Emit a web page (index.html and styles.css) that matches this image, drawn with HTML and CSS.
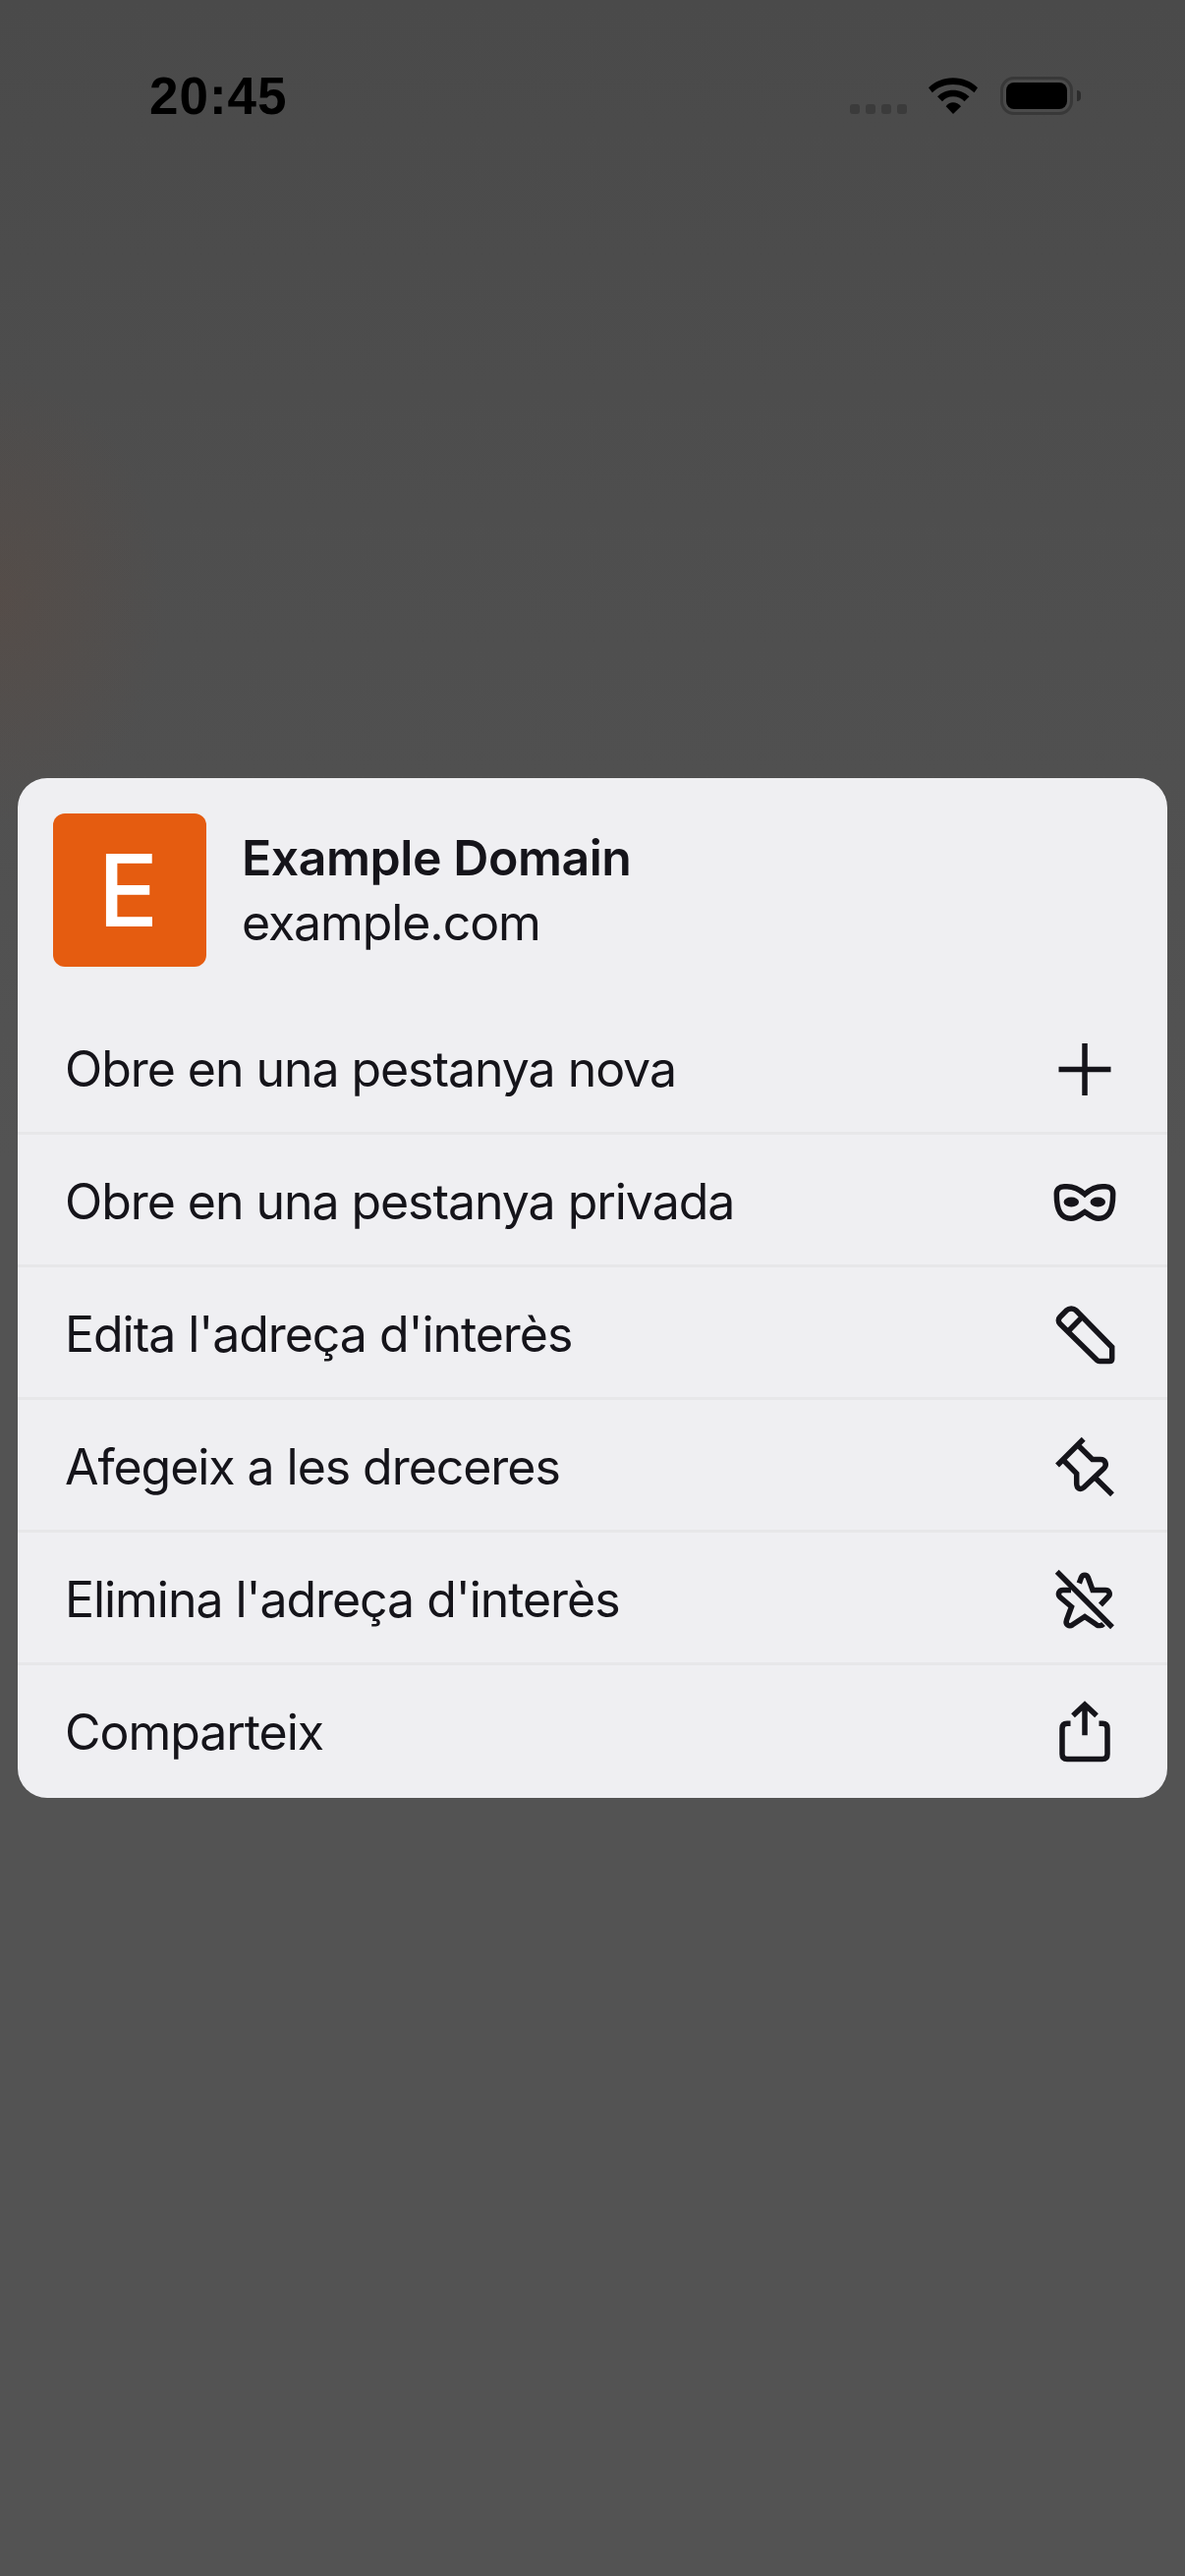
FILE: index.html
```html
<!DOCTYPE html>
<html lang="ca">
<head>
    <meta charset="UTF-8">
    <meta name="viewport" content="width=device-width, initial-scale=1.0">
    <title>Example Domain</title>
    <link rel="stylesheet" href="styles.css">
</head>
<body>
    <div class="status-bar">
        <div class="time">20:45</div>
        <div class="status-icons">
            <div class="signal"><span></span><span></span><span></span><span></span></div>
            <svg class="wifi" width="50" height="37" viewBox="0 0 50 37">
                <path d="M0 10.3C6.5 4 15 .3 25 .3S43.500 4 50 10.3L46.500 15.300C41 10 33.500 7 25 7S9 10 3.800 15.300Z"/>
                <path d="M9 19.300C13 15.200 18.800 12.700 25 12.700S37 15.200 41.500 19.300L36.500 24.300C33.500 21 29.500 19.300 25 19.300S16.800 21 14 24.300Z"/>
                <path d="M17.700 29.300C19.500 26.800 22 25.300 25 25.300S30.800 26.800 33 29.300L25 37Z"/>
            </svg>
            <div class="battery">
                <div class="battery-body"><div class="battery-level"></div></div>
                <div class="battery-nub"></div>
            </div>
        </div>
    </div>

    <div class="menu">
        <div class="menu-header">
            <div class="site-icon">E</div>
            <div class="site-info">
                <div class="site-title">Example Domain</div>
                <div class="site-url">example.com</div>
            </div>
        </div>
        <div class="menu-row">
            <span>Obre en una pestanya nova</span>
            <svg class="row-icon" viewBox="0 0 78 78"><path d="M12.500 39.500H65.500M39 13V66"/></svg>
        </div>
        <div class="menu-row">
            <span>Obre en una pestanya privada</span>
            <svg class="row-icon" viewBox="0 0 78 78">
                <path d="M39 31.500C35 28 28 23.800 21 23.800H18C13 23.800 10.300 26.500 10.300 31C10.300 40 11 46 14 50.500C17 55 21 56.300 25 56.300C31 56.300 35 52 39 49.500C43 52 47 56.300 53 56.300C57 56.300 61 55 64 50.500C67 46 67.700 40 67.700 31C67.700 26.500 65 23.800 60 23.800H57C50 23.800 43 28 39 31.500Z"/>
                <ellipse class="solid" cx="25.300" cy="39.500" rx="7.700" ry="5"/>
                <ellipse class="solid" cx="52.300" cy="39.500" rx="7.700" ry="5"/>
            </svg>
        </div>
        <div class="menu-row">
            <span>Edita l'adreça d'interès</span>
            <svg class="row-icon" viewBox="0 0 78 78">
                <path d="M30 14.800L66.700 52.200V64Q66.700 66.500 64.200 66.500H54Q52.500 66.500 51.500 65.500L13.800 28.500C11.800 26.500 11.800 23.500 13.800 21.500L20.500 14.800C23 12.300 27.500 12.300 30 14.800Z"/>
                <path d="M35.700 22.200L21.700 36.500"/>
            </svg>
        </div>
        <div class="menu-row">
            <span>Afegeix a les dreceres</span>
            <svg class="row-icon" viewBox="0 0 78 78">
                <path d="M11 37.500L37.700 10.800M50 50.500L67 67.200"/>
                <path d="M33.300 18.200L46.700 31.500H55C60 31.500 62 37 58.500 40.500L38 60C34.500 63 30.700 61 30.700 56V45.800L18.300 33.200"/>
            </svg>
        </div>
        <div class="menu-row">
            <span>Elimina l'adreça d'interès</span>
            <svg class="row-icon" viewBox="0 0 78 78">
                <path d="M10.700 10.800L67 67.200"/>
                <path d="M33.300 22.500L35.500 16.500C36.800 13.500 41 13.500 42.300 16.500L47 29.400H60C64 29.400 65.800 34 62.500 36.500L55 44.500"/>
                <path d="M25 29.400H17C12.500 29.400 11 34 14 36.800L25.500 46.500L20.500 60C19 64.500 23 67 26.500 64.800L39 56.500L51 64.800C53 66 56 66 58 64"/>
            </svg>
        </div>
        <div class="menu-row">
            <span>Comparteix</span>
            <svg class="row-icon" viewBox="0 0 78 78">
                <path d="M24.500 30.300H21Q16 30.300 16 35.300V61.500Q16 66.500 21 66.500H57Q62 66.500 62 61.500V35.300Q62 30.300 57 30.300H53.500"/>
                <path d="M39 42.200V12M27 22.200L39 11L51 22.200"/>
            </svg>
        </div>
    </div>
</body>
</html>
```

FILE: styles.css
```css
body {
    margin: 0;
    height: 2622px;
    overflow: hidden;
    font-family: Inter, "Liberation Sans", sans-serif;
    background:
        radial-gradient(ellipse 170px 230px at 0 610px, rgba(110, 70, 50, 0.2), rgba(110, 70, 50, 0)),
        linear-gradient(#4a4a4a, #535353 45%, #535353);
}
.status-bar {
    display: flex;
    justify-content: space-between;
    height: 792px;
    padding: 78px 106px 0 152px;
    box-sizing: border-box;
}
.time {
    font-family: "Liberation Sans", sans-serif;
    font-weight: bold;
    font-size: 53px;
    line-height: 39px;
    letter-spacing: 1px;
    color: #000;
}
.status-icons {
    display: flex;
    align-items: flex-start;
}
.signal {
    display: flex;
    gap: 6px;
    margin-top: 28px;
    margin-right: 22px;
}
.signal span {
    width: 10px;
    height: 10px;
    border-radius: 3px;
    background-color: #3b3b3b;
}
.wifi {
    display: block;
    margin-top: 1px;
    margin-right: 23px;
}
.battery {
    display: flex;
    align-items: center;
    gap: 4px;
}
.battery-body {
    width: 74px;
    height: 39px;
    box-sizing: border-box;
    padding: 3px;
    border: 3px solid #383838;
    border-radius: 14px;
}
.battery-level {
    height: 100%;
    border-radius: 8px;
    background-color: #000;
}
.battery-nub {
    width: 4px;
    height: 11px;
    border-radius: 0 4px 4px 0;
    background-color: #2c2c2c;
}
.menu {
    margin: 0 18px;
    border-radius: 30px;
    background-color: #efeff2;
    color: #15141a;
    overflow: hidden;
}
.menu-header {
    display: flex;
    align-items: center;
    gap: 36px;
    padding: 36px;
}
.site-icon {
    display: flex;
    justify-content: center;
    align-items: center;
    width: 156px;
    height: 156px;
    box-sizing: border-box;
    padding-right: 3px;
    border-radius: 12px;
    background-color: #e55c10;
    color: #fff;
    font-size: 102px;
    font-weight: 500;
}
.site-title {
    font-size: 50px;
    font-weight: 600;
    line-height: 66px;
    letter-spacing: -0.45px;
}
.site-url {
    font-size: 50px;
    line-height: 66px;
    letter-spacing: -1.1px;
}
.menu-row {
    display: flex;
    justify-content: space-between;
    align-items: center;
    height: 135px;
    padding: 0 45px 0 48px;
    font-size: 50px;
    letter-spacing: -1.05px;
    box-shadow: inset 0 -3px 0 #e7e7e9;
}
.menu-row:last-child {
    box-shadow: none;
}
.row-icon {
    display: block;
    width: 78px;
    height: 78px;
    fill: none;
    stroke: #15141a;
    stroke-width: 5.500;
}
.row-icon .solid {
    fill: #15141a;
    stroke: none;
}
```
